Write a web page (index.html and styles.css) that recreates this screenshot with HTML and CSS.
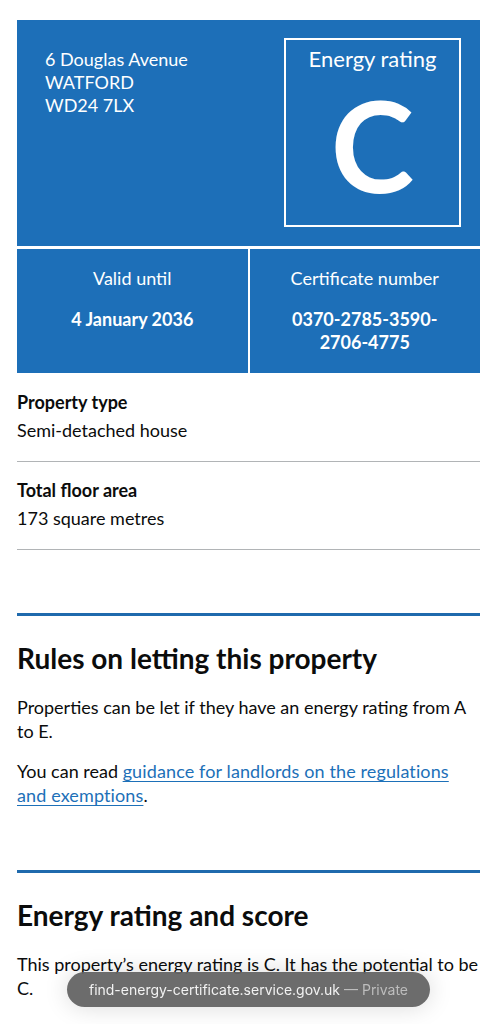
FILE: index.html
```html
<!DOCTYPE html>
<html lang="en">
<head>
    <meta charset="UTF-8">
    <meta name="viewport" content="width=device-width, initial-scale=1.0">
    <title>Energy performance certificate (EPC)</title>
    <link rel="stylesheet" href="styles.css">
</head>
<body>
    <main class="page">
        <div class="epc-box">
            <div class="epc-top">
                <p class="address">6 Douglas Avenue<br>WATFORD<br>WD24 7LX</p>
                <div class="rating">
                    <p class="rating-label">Energy rating</p>
                    <p class="rating-letter">C</p>
                </div>
            </div>
            <div class="epc-bottom">
                <div class="epc-cell">
                    <p class="cell-label">Valid until</p>
                    <p class="cell-value">4 January 2036</p>
                </div>
                <div class="epc-cell">
                    <p class="cell-label">Certificate number</p>
                    <p class="cell-value">0370-2785-3590-<br>2706-4775</p>
                </div>
            </div>
        </div>

        <dl class="summary">
            <div class="summary-row">
                <dt>Property type</dt>
                <dd>Semi-detached house</dd>
            </div>
            <div class="summary-row">
                <dt>Total floor area</dt>
                <dd>173 square metres</dd>
            </div>
        </dl>

        <section class="section">
            <h2>Rules on letting this property</h2>
            <p>Properties can be let if they have an energy rating from A to E.</p>
            <p>You can read <a href="#">guidance for landlords on the regulations and exemptions</a>.</p>
        </section>

        <section class="section">
            <h2>Energy rating and score</h2>
            <p>This property’s energy rating is C. It has the potential to be C.</p>
        </section>
    </main>

    <div class="url-pill">find-energy-certificate.service.gov.uk <span class="private">— Private</span></div>
</body>
</html>
```

FILE: styles.css
```css
body{
    margin: 0;
    font-family: Lato, "Noto Sans", sans-serif;
    color: #0b0c0c;
    background: #fff;
}
p{
    margin: 0;
}
.page{
    padding: 20px 17px 80px;
}

.epc-box{
    background: #1d6fb8;
    color: #fff;
}
.epc-top{
    display: flex;
    justify-content: space-between;
    padding: 18px 19px 19px 28px;
    border-bottom: 3px solid #fff;
}
.address{
    font-size: 18px;
    line-height: 23px;
    padding-top: 10px;
}
.rating{
    width: 173px;
    height: 185px;
    border: 2px solid #fff;
    text-align: center;
}
.rating-label{
    font-size: 22px;
    line-height: 26px;
    padding-top: 6px;
}
.rating-letter{
    font-size: 126px;
    font-weight: 700;
    line-height: 130px;
    margin-top: 8px;
}
.epc-bottom{
    display: grid;
    grid-template-columns: 1fr 1fr;
    gap: 2px;
    background: #fff;
}
.epc-cell{
    background: #1d6fb8;
    text-align: center;
    padding: 18px 8px 19px;
}
.cell-label{
    font-size: 18px;
    line-height: 22px;
}
.cell-value{
    font-size: 18px;
    font-weight: 700;
    line-height: 23px;
    margin-top: 19px;
}

.summary{
    margin: 1px 0 0;
}
.summary-row{
    border-bottom: 1px solid #b1b4b6;
    padding: 16px 0 19px;
}
.summary dt{
    font-size: 18px;
    font-weight: 700;
    line-height: 24px;
}
.summary dd{
    margin: 4px 0 0;
    font-size: 18px;
    line-height: 24px;
}

.section{
    border-top: 3px solid #1f6aad;
    margin-top: 63px;
    padding-top: 25px;
}
.section + .section{
    margin-top: 63px;
}
.section h2{
    margin: 0 0 20px;
    font-size: 28px;
    line-height: 34px;
    font-weight: 700;
}
.section p{
    font-size: 18px;
    line-height: 24px;
    margin-bottom: 16px;
}
.section a{
    color: #1d70b8;
    letter-spacing: 0.12px;
    text-decoration: underline;
    text-underline-offset: 3px;
    text-decoration-thickness: 1px;
}

.url-pill{
    position: fixed;
    left: 67px;
    top: 972px;
    width: 363px;
    height: 35px;
    border-radius: 18px;
    background: rgba(100, 100, 100, 0.95);
    color: #f2f2f2;
    font-family: Inter, "Noto Sans", sans-serif;
    font-size: 14px;
    line-height: 35px;
    text-align: center;
    box-shadow: 0 0 24px rgba(0, 0, 0, 0.15);
}
.private{
    color: #bdbdbd;
}
```
